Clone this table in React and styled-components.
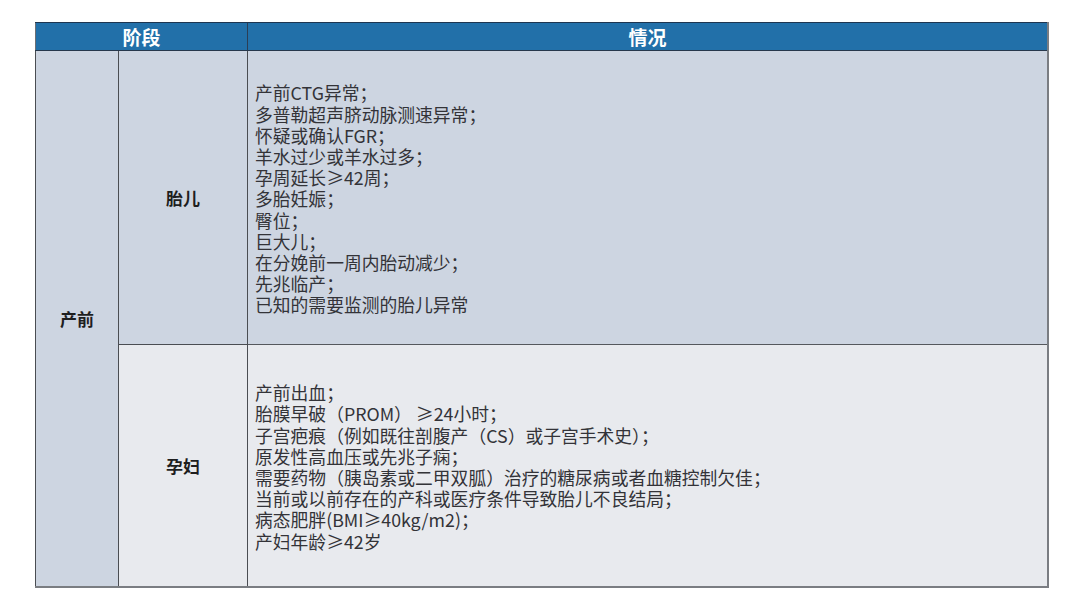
import React from "react";
import styled, { createGlobalStyle } from "styled-components";

const Global = createGlobalStyle`
  html, body { margin: 0; padding: 0; background: #ffffff; }
  body { font-family: "Noto Sans CJK SC", "Noto Sans", sans-serif; }
`;

const Page = styled.div`
  width: 1080px;
  height: 608px;
  padding: 22px 0 0 35px;
  box-sizing: border-box;
  background: #fff;
`;

const Table = styled.table`
  width: 1014px;
  border-collapse: collapse;
  table-layout: fixed;
  border-right: 2px solid #7a7d82;
  border-bottom: 2px solid #7a7d82;
  border-left: 1px solid #6b6e74;
`;

const HeadCell = styled.th`
  height: 27px;
  padding: 0;
  background: #2270a9;
  color: #ffffff;
  font-weight: 700;
  font-size: 19px;
  line-height: 27px;
  text-align: center;
  border-top: 1px solid #1d3550;
  border-bottom: 1px solid #27384c;
  border-left: ${(p) => (p.$divider ? "1px solid #2b3e55" : "none")};
`;

const StageCell = styled.td`
  padding: 0;
  background: ${(p) => p.$bg};
  border: 1px solid #4a4d52;
  border-top: none;
  text-align: center;
  vertical-align: middle;
  font-weight: 700;
  font-size: 17px;
  color: #1e1e1e;
`;

const InfoCell = styled.td`
  height: ${(p) => p.$h}px;
  padding: 0 0 0 7px;
  background: ${(p) => p.$bg};
  border-left: 1px solid #4a4d52;
  border-bottom: 1px solid #55585d;
  vertical-align: middle;
  text-align: left;
`;

const Lines = styled.div`
  display: flex;
  flex-direction: column;
  padding-top: 3px;
  font-size: 17.8px;
  line-height: 21.2px;
  color: #333338;
  font-weight: 400;
`;

const fetal = [
  "产前CTG异常；",
  "多普勒超声脐动脉测速异常；",
  "怀疑或确认FGR；",
  "羊水过少或羊水过多；",
  "孕周延长≥42周；",
  "多胎妊娠；",
  "臀位；",
  "巨大儿；",
  "在分娩前一周内胎动减少；",
  "先兆临产；",
  "已知的需要监测的胎儿异常",
];

const maternal = [
  "产前出血；",
  "胎膜早破（PROM） ≥24小时；",
  "子宫疤痕（例如既往剖腹产（CS）或子宫手术史）；",
  "原发性高血压或先兆子痫；",
  "需要药物（胰岛素或二甲双胍）治疗的糖尿病或者血糖控制欠佳；",
  "当前或以前存在的产科或医疗条件导致胎儿不良结局；",
  "病态肥胖(BMI≥40kg/m2)；",
  "产妇年龄≥42岁",
];

export default function App() {
  return (
    <>
      <Global />
      <Page>
        <Table>
          <colgroup>
            <col style={{ width: 83 }} />
            <col style={{ width: 129 }} />
            <col />
          </colgroup>
          <thead>
            <tr>
              <HeadCell colSpan={2}>阶段</HeadCell>
              <HeadCell $divider>情况</HeadCell>
            </tr>
          </thead>
          <tbody>
            <tr>
              <StageCell rowSpan={2} $bg="#cdd5e1">产前</StageCell>
              <StageCell $bg="#cdd5e1">胎儿</StageCell>
              <InfoCell $h={293} $bg="#cdd5e1">
                <Lines>
                  {fetal.map((t) => (
                    <span key={t}>{t}</span>
                  ))}
                </Lines>
              </InfoCell>
            </tr>
            <tr>
              <StageCell $bg="#e8eaee">孕妇</StageCell>
              <InfoCell $h={241} $bg="#e8eaee">
                <Lines>
                  {maternal.map((t) => (
                    <span key={t}>{t}</span>
                  ))}
                </Lines>
              </InfoCell>
            </tr>
          </tbody>
        </Table>
      </Page>
    </>
  );
}
